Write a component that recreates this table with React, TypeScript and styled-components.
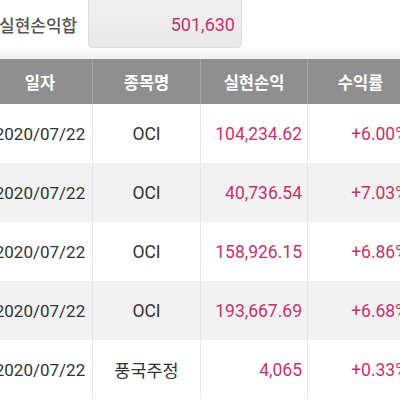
import React from 'react';
import styled, { createGlobalStyle } from 'styled-components';

const GlobalStyle = createGlobalStyle`
  html, body {
    margin: 0;
    padding: 0;
    background: #ffffff;
    overflow: hidden;
  }
  body {
    font-family: Roboto, "Noto Sans CJK KR", "Noto Sans", sans-serif;
  }
`;

const Screen = styled.div`
  width: 400px;
  height: 400px;
  overflow: hidden;
  background: #ffffff;
`;

const SummaryBar = styled.div`
  height: 59px;
  display: flex;
  align-items: flex-start;
  background: linear-gradient(to bottom, #ffffff 0%, #ffffff 80%, #f0f0f0 100%);
`;

const SummaryLabel = styled.div`
  width: 78px;
  height: 48px;
  margin-left: -1px;
  display: flex;
  align-items: center;
  font-size: 17px;
  font-weight: 500;
  color: #555555;
  white-space: nowrap;
`;

const SummaryBox = styled.div`
  margin-left: 11px;
  width: 154px;
  height: 50px;
  margin-top: -2px;
  padding: 2px 6px 0 0;
  box-sizing: border-box;
  display: flex;
  align-items: center;
  justify-content: flex-end;
  background: linear-gradient(to bottom, #f1f1f1, #e8e8e8);
  border: 1px solid #dddddd;
  border-radius: 0 0 4px 4px;
  font-size: 18px;
  color: #c8336b;
`;

const Grid = styled.div`
  margin-left: -12px;
  width: 425px;
  display: grid;
  grid-template-columns: 104px 108px 107px 106px;
`;

const HeadCell = styled.div`
  height: 45px;
  display: flex;
  align-items: center;
  justify-content: center;
  background: #8f8f8f;
  color: #ffffff;
  font-weight: 700;
  font-size: 16.5px;
  border-left: 1px solid #a2a2a2;
  &:first-child {
    border-left: none;
  }
`;

const Cell = styled.div<{ $shade: boolean; $align: 'center' | 'right'; $pink?: boolean; $first?: boolean }>`
  height: 59px;
  display: flex;
  align-items: center;
  justify-content: ${({ $align }) => ($align === 'right' ? 'flex-end' : 'center')};
  padding-right: ${({ $align }) => ($align === 'right' ? '5px' : '0')};
  box-sizing: border-box;
  background: ${({ $shade }) => ($shade ? '#f2f2f2' : '#ffffff')};
  border-left: ${({ $first }) => ($first ? 'none' : '1px solid #e8e8e8')};
  color: ${({ $pink }) => ($pink ? '#c8336b' : '#333333')};
  font-size: ${({ $first }) => ($first ? '17px' : '17.5px')};
  white-space: nowrap;
`;

const rows = [
  { date: '2020/07/22', name: 'OCI', profit: '104,234.62', rate: '+6.00%' },
  { date: '2020/07/22', name: 'OCI', profit: '40,736.54', rate: '+7.03%' },
  { date: '2020/07/22', name: 'OCI', profit: '158,926.15', rate: '+6.86%' },
  { date: '2020/07/22', name: 'OCI', profit: '193,667.69', rate: '+6.68%' },
  { date: '2020/07/22', name: '풍국주정', profit: '4,065', rate: '+0.33%' },
];

function App(): JSX.Element {
  return (
    <>
      <GlobalStyle />
      <Screen>
        <SummaryBar>
          <SummaryLabel>실현손익합</SummaryLabel>
          <SummaryBox>501,630</SummaryBox>
        </SummaryBar>
        <Grid>
          <HeadCell>일자</HeadCell>
          <HeadCell>종목명</HeadCell>
          <HeadCell>실현손익</HeadCell>
          <HeadCell>수익률</HeadCell>
          {rows.map((row, idx) => {
            const shade = idx % 2 === 1;
            return (
              <React.Fragment key={idx}>
                <Cell $shade={shade} $align="center" $first>
                  {row.date}
                </Cell>
                <Cell $shade={shade} $align="center">
                  {row.name}
                </Cell>
                <Cell $shade={shade} $align="right" $pink>
                  {row.profit}
                </Cell>
                <Cell $shade={shade} $align="right" $pink>
                  {row.rate}
                </Cell>
              </React.Fragment>
            );
          })}
        </Grid>
      </Screen>
    </>
  );
}

export default App;
